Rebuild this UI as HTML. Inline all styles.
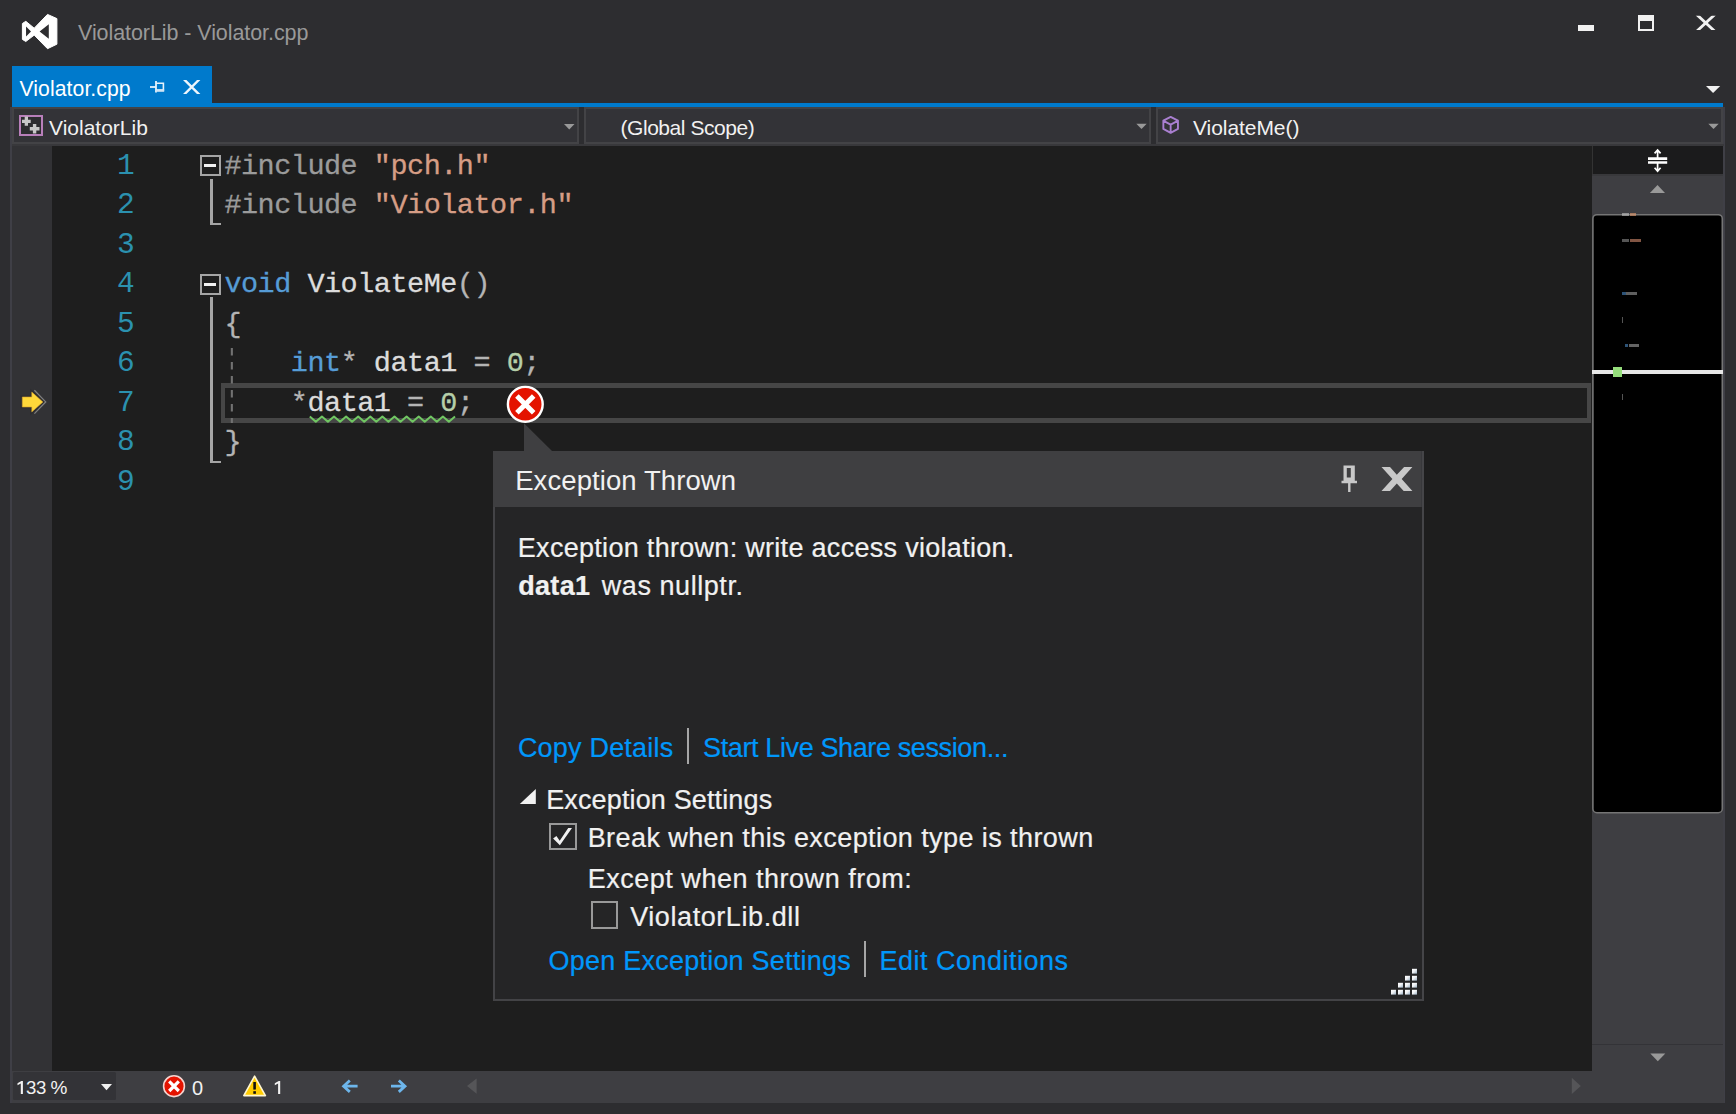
<!DOCTYPE html>
<html>
<head>
<meta charset="utf-8">
<title>ViolatorLib - Violator.cpp</title>
<style>
*{box-sizing:border-box;margin:0;padding:0}
html,body{width:1736px;height:1114px;overflow:hidden;background:#2d2d30}
body{position:relative;font-family:"Liberation Sans",sans-serif;color:#f1f1f1}
.abs{position:absolute}
.t{position:absolute;white-space:nowrap;line-height:1}
.mono{font-family:"Liberation Mono",monospace}
/* nav bar */
.combo{top:107px;height:37px;background:#333337;border:2px solid #434346}
.navtxt{font-size:21px;color:#f1f1f1}
/* editor */
#editor{left:12px;top:146px;width:1580px;height:925px;background:#1e1e1e}
#margin{left:12px;top:146px;width:40px;height:925px;background:#323235}
.ln{left:60px;width:74.6px;text-align:right;color:#2b91af;font-size:29.5px}
.code{-webkit-text-stroke:0.3px;left:224.4px;font-size:28.5px;letter-spacing:-0.5px;color:#dcdcdc;white-space:pre}
.pp{color:#9b9b9b}.str{color:#d69d85}.kw{color:#569cd6}.num{color:#b5cea8}.op{color:#b4b4b4}
.fold{left:200px;width:21px;height:21px;border:2px solid #a5a5a5;background:#1e1e1e}
.fold i{position:absolute;left:2.3px;top:7.4px;width:12.2px;height:2.2px;background:#f1f1f1}
.ol{background:#a5a5a5}
/* popup */
.pt{font-size:27px;color:#f1f1f1;-webkit-text-stroke:0.22px}
.lnk{color:#0097fb}
.cb{width:28px;height:28px;border:2px solid #999;background:#252526}
</style>
</head>
<body>
<!-- TITLE BAR -->
<svg class="abs" style="left:0;top:0" width="100" height="66" viewBox="0 0 100 66">
<path fill="#fff" stroke="#fff" stroke-width="1" stroke-linejoin="round" d="M47.5 14.4 L56.9 18.6 L56.9 44.2 L47.5 48.7 L34.2 35.1 L25.8 41.5 L22.4 39.4 L22.4 23.5 L25.8 21.3 L34.2 28.2 Z"/>
<path fill="#2d2d30" d="M26.05 26.5 L31 31.4 L26.05 36.6 Z M48.8 24.3 L39.6 31.4 L48.8 38.8 Z"/>
</svg>
<div class="t" style="left:78px;top:23.4px;font-size:21.5px;letter-spacing:-0.075px;color:#999">ViolatorLib - Violator.cpp</div>
<div class="abs" style="left:1578px;top:25px;width:16px;height:6px;background:#f1f1f1"></div>
<div class="abs" style="left:1638px;top:15px;width:16px;height:16px;border:2px solid #f1f1f1;border-top-width:6px"></div>
<svg class="abs" style="left:1694px;top:12px" width="24" height="22" viewBox="0 0 24 22"><defs><clipPath id="cx1"><rect x="0" y="3.7" width="24" height="14.4"/></clipPath></defs><path clip-path="url(#cx1)" d="M2.6 2.4 L20.9 19.4 M20.9 2.4 L2.6 19.4" stroke="#f1f1f1" stroke-width="2.8" fill="none"/></svg>
<svg class="abs" style="left:1704px;top:84px" width="20" height="12" viewBox="0 0 20 12"><path d="M2 2 L16.2 2 L9.1 9 Z" fill="#f1f1f1"/></svg>

<!-- TAB -->
<div class="abs" style="left:12px;top:66px;width:200px;height:38px;background:#007acc"></div>
<div class="t" style="left:19.5px;top:77.6px;font-size:21.2px;color:#fff;letter-spacing:0.073px">Violator.cpp</div>
<!-- tab pin -->
<svg class="abs" style="left:148px;top:78px" width="20" height="18" viewBox="0 0 20 18">
<path d="M2 9 L8 9" stroke="#e6f2fb" stroke-width="1.8"/>
<path d="M8 3 L8 14.5" stroke="#e6f2fb" stroke-width="1.8"/>
<path d="M8 5.2 L15.4 5.2 L15.4 12 L8 12" stroke="#e6f2fb" stroke-width="1.6" fill="none"/>
<path d="M8 12.6 L16.2 12.6" stroke="#cfe4f5" stroke-width="2.4"/>
</svg>
<svg class="abs" style="left:180px;top:77px" width="24" height="20" viewBox="180 77 24 20"><defs><clipPath id="cx2"><rect x="180" y="80.1" width="24" height="13.9"/></clipPath></defs><path clip-path="url(#cx2)" d="M182.7 78 L200.7 96 M200.7 78 L182.7 96" stroke="#eef6fc" stroke-width="2.4" fill="none"/></svg>
<div class="abs" style="left:12px;top:103px;width:1711px;height:4px;background:#007acc"></div>

<!-- NAV BAR -->
<div class="abs" style="left:10px;top:107px;width:2px;height:996px;background:#3f3f46"></div>
<div class="abs" style="left:1723px;top:107px;width:2px;height:996px;background:#3f3f46"></div>
<div class="abs" style="left:12px;top:144px;width:1712px;height:2px;background:#38383b"></div>
<div class="abs combo" style="left:12px;width:567px"></div>
<div class="abs combo" style="left:584px;width:567px"></div>
<div class="abs combo" style="left:1156px;width:567px"></div>
<!-- project icon -->
<div class="abs" style="left:18.8px;top:114.6px;width:24.6px;height:21px;border:2px solid #b87fba;background:#2d2d30"></div>
<svg class="abs" style="left:10px;top:104px" width="40" height="40" viewBox="10 104 40 40">
<path fill="#c8c8c8" d="M24.7 116.6h3.3v3.1h2.7v3.2h-2.7v2.8h-3.3v-2.8h-2.7v-3.2h2.7z M32.9 124h3.4v3h3.2v3.4h-3.2v3.1h-3.4v-3.1h-3.1v-3.4h3.1z"/>
</svg>
<div class="t navtxt" style="left:49px;top:116.6px">ViolatorLib</div>
<div class="t navtxt" style="left:620.5px;top:116.7px;letter-spacing:-0.452px">(Global Scope)</div>
<div class="t navtxt" style="left:1193px;top:117.1px;letter-spacing:-0.060px">ViolateMe()</div>
<svg class="abs" style="left:562px;top:122px" width="14" height="9" viewBox="0 0 14 9"><path d="M2 2 L12.5 2 L7.25 7.4 Z" fill="#999"/></svg>
<svg class="abs" style="left:1134px;top:122px" width="14" height="9" viewBox="0 0 14 9"><path d="M2.3 1.8 L12.7 1.8 L7.5 7.1 Z" fill="#999"/></svg>
<svg class="abs" style="left:1706px;top:122px" width="14" height="9" viewBox="0 0 14 9"><path d="M2.3 1.8 L12.7 1.8 L7.5 7.1 Z" fill="#999"/></svg>
<!-- cube icon -->
<svg class="abs" style="left:1160px;top:114px" width="22" height="22" viewBox="0 0 22 22">
<path d="M10.65 2.9 L17.95 6.7 L17.95 14.9 L10.65 18.9 L3.35 14.9 L3.35 6.7 Z M3.6 6.9 L10.65 10.7 L17.7 6.9 M10.65 10.7 L10.65 18.7" fill="none" stroke="#a97fd0" stroke-width="1.9" stroke-linejoin="round"/>
</svg>

<!-- EDITOR -->
<div class="abs" id="editor"></div>
<div class="abs" id="margin"></div>
<!-- current line box -->
<div class="abs" style="left:221px;top:383px;width:1369.5px;height:40px;border:5px solid #464646;border-left-width:4px;border-right-width:4px"></div>
<!-- line numbers -->
<div class="t mono ln" style="top:151.6px">1</div>
<div class="t mono ln" style="top:191.1px">2</div>
<div class="t mono ln" style="top:230.6px">3</div>
<div class="t mono ln" style="top:270.1px">4</div>
<div class="t mono ln" style="top:309.6px">5</div>
<div class="t mono ln" style="top:349.1px">6</div>
<div class="t mono ln" style="top:388.6px">7</div>
<div class="t mono ln" style="top:428.1px">8</div>
<div class="t mono ln" style="top:467.6px">9</div>
<!-- outlining -->
<div class="abs ol" style="left:210.4px;top:178.6px;width:2.7px;height:46.4px"></div>
<div class="abs ol" style="left:210.4px;top:222.6px;width:10.8px;height:2.4px"></div>
<div class="abs ol" style="left:210.4px;top:297.2px;width:2.7px;height:166px"></div>
<div class="abs ol" style="left:210.4px;top:460.8px;width:10.8px;height:2.4px"></div>
<div class="abs fold" style="top:155px"><i></i></div>
<div class="abs fold" style="top:274px"><i></i></div>
<!-- indent guide -->
<svg class="abs" style="left:230px;top:347px" width="4" height="77" viewBox="0 0 4 77"><path d="M1.85 1 L1.85 76" stroke="#727272" stroke-width="2.1" stroke-dasharray="7.5 6.5" fill="none"/></svg>
<!-- code -->
<div class="t mono code" style="top:152.9px"><span class="pp">#include</span> <span class="str">"pch.h"</span></div>
<div class="t mono code" style="top:192.4px"><span class="pp">#include</span> <span class="str">"Violator.h"</span></div>
<div class="t mono code" style="top:271.4px"><span class="kw">void</span> ViolateMe<span class="op">()</span></div>
<div class="t mono code" style="top:310.9px"><span class="op">{</span></div>
<div class="t mono code" style="top:350.4px">    <span class="kw">int</span><span class="op">*</span> data1 <span class="op">=</span> <span class="num">0</span><span class="op">;</span></div>
<div class="t mono code" style="top:389.9px">    <span class="op">*</span>data1 <span class="op">=</span> <span class="num">0</span><span class="op">;</span></div>
<div class="t mono code" style="top:429.4px"><span class="op">}</span></div>
<!-- squiggle -->
<svg class="abs" style="left:309px;top:414px" width="150" height="11" viewBox="0 0 150 11"><path d="M0.8 2.6 L6.8 7.8 L12.9 2.6 L18.9 7.8 L25.0 2.6 L31.1 7.8 L37.1 2.6 L43.1 7.8 L49.2 2.6 L55.2 7.8 L61.3 2.6 L67.3 7.8 L73.4 2.6 L79.4 7.8 L85.5 2.6 L91.5 7.8 L97.6 2.6 L103.6 7.8 L109.7 2.6 L115.7 7.8 L121.8 2.6 L127.8 7.8 L133.9 2.6 L139.9 7.8 L146.0 2.6" stroke="#70c662" stroke-width="2" stroke-linejoin="round" fill="none"/></svg>
<!-- instruction pointer arrow -->
<svg class="abs" style="left:14px;top:384px" width="38" height="36" viewBox="14 384 38 36">
<path d="M21.9 397 H31.8 V392.1 L42.9 402 L31.8 411.9 V407 H21.9 Z" fill="none" stroke="#2c2c30" stroke-width="3" stroke-linejoin="miter"/>
<path d="M34.4 390.3 L45.7 401.9 L34.4 413.6" fill="none" stroke="#7e7e7e" stroke-width="1.3"/>
<path d="M22.3 397 H31.8 V392.1 L42.9 402 L31.8 411.9 V407 H22.3 Z" fill="#ffd83a" stroke="#d9a32c" stroke-width="0.6" stroke-linejoin="round"/>
</svg>

<!-- SCROLL COLUMN -->
<div class="abs" style="left:1592px;top:146px;width:131px;height:925px;background:#3e3e42"></div>
<div class="abs" style="left:1592px;top:146px;width:131px;height:28px;background:#1b1b1c;border-left:1px solid #333"></div>
<div class="abs" style="left:1592px;top:174px;width:131px;height:2px;background:#38383b"></div>
<svg class="abs" style="left:1644px;top:146px" width="28" height="28" viewBox="0 0 28 28">
<path d="M4 12.6 H23.2 M4 16.5 H23.2" stroke="#fff" stroke-width="2.6"/>
<path d="M13.6 4 V12 M13.6 17 V25.2 M10.6 7.4 L13.6 4 L16.6 7.4 M10.6 21.8 L13.6 25.2 L16.6 21.8" stroke="#fff" stroke-width="1.7" fill="none"/>
</svg>
<svg class="abs" style="left:1648px;top:183px" width="20" height="12" viewBox="0 0 20 12"><path d="M1.9 9.9 L17 9.9 L9.5 2 Z" fill="#999"/></svg>
<svg class="abs" style="left:1648px;top:1051px" width="20" height="12" viewBox="0 0 20 12"><path d="M2.3 2.4 L17.3 2.4 L9.8 10.2 Z" fill="#999"/></svg>
<div class="abs" style="left:1592px;top:1044px;width:131px;height:1px;background:#333337"></div>
<!-- viewport thumb -->
<svg class="abs" style="left:1591px;top:212px" width="134" height="604" viewBox="1591 212 134 604"><rect x="1592.9" y="214.7" width="129.4" height="598" rx="4" ry="4" fill="#000" stroke="#757575" stroke-width="1.6"/></svg>
<!-- mini code -->
<div class="abs" style="left:1591px;top:210px;width:134px;height:200px;filter:blur(0.45px);opacity:0.62">
<div class="abs" style="left:31px;top:3px;width:7px;height:3.2px;background:#c0c0c0"></div>
<div class="abs" style="left:39px;top:3px;width:6px;height:3.2px;background:#e09a70"></div>
<div class="abs" style="left:31px;top:29px;width:7px;height:3.2px;background:#8a8a8a"></div>
<div class="abs" style="left:39px;top:29px;width:11px;height:3.2px;background:#d08a6c"></div>
<div class="abs" style="left:31px;top:81.5px;width:4px;height:3.2px;background:#4a86c0"></div>
<div class="abs" style="left:35px;top:81.5px;width:11px;height:3.2px;background:#9a9a9a"></div>
<div class="abs" style="left:31px;top:107px;width:1.2px;height:6px;background:#888"></div>
<div class="abs" style="left:34px;top:134px;width:3px;height:3.2px;background:#4a86c0"></div>
<div class="abs" style="left:38px;top:134px;width:10px;height:3.2px;background:#a0a0a0"></div>
<div class="abs" style="left:31px;top:184px;width:1.2px;height:6px;background:#888"></div>
</div>
<div class="abs" style="left:1592px;top:370px;width:131px;height:4px;background:#e6e6e6"></div>
<div class="abs" style="left:1613px;top:366.5px;width:9px;height:10.5px;background:#95dd7b"></div>

<!-- BOTTOM BAR -->
<div class="abs" style="left:12px;top:1070.5px;width:1712px;height:32.5px;background:#3e3e42"></div>
<div class="abs" style="left:12.6px;top:1071.6px;width:103.2px;height:28.3px;background:#333337;border-radius:1.5px"></div>
<svg class="abs" style="left:0;top:1070px" width="300" height="34" viewBox="0 1070 300 34"><path id="one" d="M22.9 1080.9 V1094.1 H20.8 V1083.6 L17.5 1085.3 V1083.2 L21.4 1080.9 Z" fill="#f1f1f1"/><use href="#one" x="257.3"/></svg>
<div class="t" style="left:25.9px;top:1078.5px;font-size:18.6px;letter-spacing:-0.35px;color:#f1f1f1">33</div>
<div class="t" style="left:50.4px;top:1078.2px;font-size:19px;color:#f1f1f1">%</div>
<svg class="abs" style="left:99px;top:1081px" width="16" height="12" viewBox="0 0 16 12"><path d="M2 3 L13 3 L7.5 9.2 Z" fill="#f1f1f1"/></svg>
<!-- error icon small -->
<svg class="abs" style="left:161px;top:1074px" width="26" height="25" viewBox="0 0 26 25">
<circle cx="13" cy="12.2" r="10.4" fill="#e41300" stroke="#f4d4d0" stroke-width="1.6"/>
<path d="M8.2 7.4 L17.8 17 M17.8 7.4 L8.2 17" stroke="#fff" stroke-width="3.2"/>
</svg>
<div class="t" style="left:191.9px;top:1077.6px;font-size:20px;color:#f1f1f1">0</div>
<!-- warning icon -->
<svg class="abs" style="left:241px;top:1073px" width="28" height="26" viewBox="0 0 28 26">
<path d="M13.6 3.2 L24.4 22.6 L2.8 22.6 Z" fill="#ffcc00" stroke="#fff6d0" stroke-width="1.6" stroke-linejoin="round"/>
<path d="M13.6 9 L13.6 16.6" stroke="#111" stroke-width="2.6"/>
<rect x="12.3" y="18.2" width="2.6" height="2.6" fill="#111"/>
</svg>
<!-- nav arrows -->
<svg class="abs" style="left:336px;top:1074px" width="80" height="24" viewBox="336 1074 80 24"><path d="M357.6 1086.2 H344 M349.8 1080.5 L343.6 1086.2 L349.8 1091.9 M391 1086.2 H404.6 M398.8 1080.5 L405 1086.2 L398.8 1091.9" stroke="#6db6ec" stroke-width="2.8" fill="none"/></svg>
<svg class="abs" style="left:465px;top:1076px" width="14" height="20" viewBox="0 0 14 20"><path d="M11.6 2.4 L11.6 17.7 L2 10 Z" fill="#555558"/></svg>
<svg class="abs" style="left:1569px;top:1076px" width="14" height="20" viewBox="0 0 14 20"><path d="M2.8 1.7 L2.8 18.1 L11.8 9.9 Z" fill="#555558"/></svg>

<!-- POPUP -->
<svg class="abs" style="left:520px;top:420px" width="40" height="34" viewBox="0 0 40 34"><path d="M4 3.2 L32 31 L4 31 Z" fill="#3f3f41"/></svg>
<div class="abs" style="left:493px;top:451px;width:931px;height:549.5px;background:#252526;border:2px solid #434346"></div>
<div class="abs" style="left:493px;top:451px;width:928.2px;height:56px;background:#3f3f41"></div>
<div class="abs" style="left:1421.2px;top:451px;width:0.8px;height:56px;background:#38383b"></div>
<div class="abs" style="left:1422px;top:451px;width:2px;height:549.5px;background:#454548"></div>
<div class="t" style="left:515.2px;top:467.1px;font-size:27.5px;letter-spacing:0.079px;color:#f1f1f1">Exception Thrown</div>
<!-- popup pin -->
<svg class="abs" style="left:1338px;top:462px" width="24" height="34" viewBox="0 0 24 34">
<path fill="#c8c8c8" fill-rule="evenodd" d="M5.5 3.4 H16.8 V18.8 H19 V21.2 H12.5 V30.1 H10.1 V21.2 H3.5 V18.8 H5.5 Z M8.8 5.9 H12.8 V15.6 H8.8 Z"/>
</svg>
<!-- popup close -->
<svg class="abs" style="left:1378px;top:463px" width="38" height="32" viewBox="0 0 38 32">
<path fill="#c8c8c8" d="M3.5 4.1 L12 4.1 L18.8 11.7 L26.1 4.1 L34.4 4.1 L23.7 16 L34.4 27.9 L25.7 27.9 L18.8 20.6 L12 27.9 L3.5 27.9 L14.4 16 Z"/>
</svg>
<!-- error circle big -->
<svg class="abs" style="left:504px;top:383px" width="42" height="42" viewBox="0 0 42 42">
<circle cx="21.3" cy="21.3" r="17.4" fill="#e41300" stroke="#fff" stroke-width="2.4"/>
<path d="M12.9 12.9 L29.7 29.7 M29.7 12.9 L12.9 29.7" stroke="#fff" stroke-width="5"/>
</svg>

<div class="t pt" style="left:517.8px;top:535.3px;letter-spacing:0.296px">Exception thrown: write access violation.</div>
<div class="t pt" style="left:518.2px;top:572.6px;letter-spacing:0.313px;font-weight:bold">data1</div>
<div class="t pt" style="left:601.8px;top:572.6px;letter-spacing:0.556px">was nullptr.</div>

<div class="t pt lnk" style="left:517.9px;top:734.7px;letter-spacing:0.203px">Copy Details</div>
<div class="abs" style="left:686.9px;top:727.6px;width:2.1px;height:36.6px;background:#a6a6a6"></div>
<div class="t pt lnk" style="left:703.0px;top:734.7px;letter-spacing:-0.375px">Start Live Share session...</div>

<svg class="abs" style="left:518px;top:788px" width="20" height="18" viewBox="0 0 20 18"><path d="M17.8 1 L17.8 16 L1.8 16 Z" fill="#f1f1f1"/></svg>
<div class="t pt" style="left:546.2px;top:786.6px;letter-spacing:0.139px">Exception Settings</div>

<div class="abs cb" style="left:549px;top:823px;width:28px;height:27px"></div>
<svg class="abs" style="left:540px;top:815px" width="50" height="45" viewBox="540 815 50 45"><path d="M553.1 838.5 L556.4 836 L559.7 840.7 L568.2 828.1 L572 828.1 L559.9 845.2 Z" fill="#f1f1f1"/></svg>
<div class="t pt" style="left:587.7px;top:825.4px;letter-spacing:0.416px">Break when this exception type is thrown</div>
<div class="t pt" style="left:587.7px;top:865.5px;letter-spacing:0.520px">Except when thrown from:</div>
<div class="abs cb" style="left:591px;top:901px;width:27px;height:28px"></div>
<div class="t pt" style="left:630.2px;top:904.3px;letter-spacing:0.578px">ViolatorLib.dll</div>

<div class="t pt lnk" style="left:548.5px;top:948.4px;letter-spacing:0.232px">Open Exception Settings</div>
<div class="abs" style="left:864.2px;top:941px;width:2.1px;height:36.4px;background:#a6a6a6"></div>
<div class="t pt lnk" style="left:879.5px;top:948.4px;letter-spacing:0.485px">Edit Conditions</div>

<!-- resize grip -->
<svg class="abs" style="left:1388px;top:966px" width="32" height="32" viewBox="0 0 32 32"><defs><linearGradient id="gg" x1="0" y1="0" x2="1" y2="1"><stop offset="0" stop-color="#fff"/><stop offset="0.45" stop-color="#f2f4f6"/><stop offset="1" stop-color="#9fb4c6"/></linearGradient></defs><rect x="3" y="23.8" width="5" height="4.8" fill="url(#gg)"/><rect x="10" y="16.8" width="5" height="4.8" fill="url(#gg)"/><rect x="10" y="23.8" width="5" height="4.8" fill="url(#gg)"/><rect x="17" y="9.8" width="5" height="4.8" fill="url(#gg)"/><rect x="17" y="16.8" width="5" height="4.8" fill="url(#gg)"/><rect x="17" y="23.8" width="5" height="4.8" fill="url(#gg)"/><rect x="24" y="2.8" width="5" height="4.8" fill="url(#gg)"/><rect x="24" y="9.8" width="5" height="4.8" fill="url(#gg)"/><rect x="24" y="16.8" width="5" height="4.8" fill="url(#gg)"/><rect x="24" y="23.8" width="5" height="4.8" fill="url(#gg)"/></svg>
</body>
</html>
